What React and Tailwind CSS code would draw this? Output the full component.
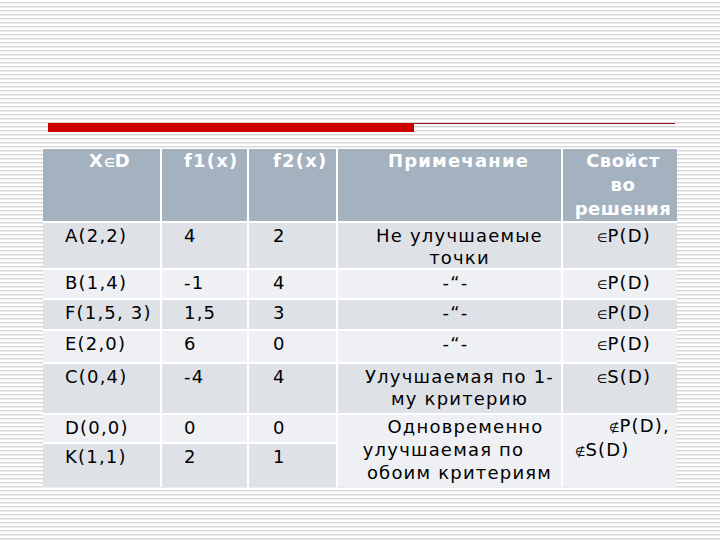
import React from "react";

// цвета ячеек таблицы
const DARK = "bg-[#dee2e7]";
const LIGHT = "bg-[#eef0f3]";

function Elem({ not = false }) {
  return <span className="text-[12px] tracking-normal">{not ? "∉" : "∈"}</span>;
}

const rows = [
  { x: "A(2,2)", f1: "4", f2: "2", note: ["Не улучшаемые", "точки"], set: "P(D)", shade: DARK },
  { x: "B(1,4)", f1: "-1", f2: "4", note: ["-“-"], set: "P(D)", shade: LIGHT, pad: "pl-[12px]" },
  { x: "F(1,5, 3)", f1: "1,5", f2: "3", note: ["-“-"], set: "P(D)", shade: DARK, pad: "pl-[12px]" },
  { x: "E(2,0)", f1: "6", f2: "0", note: ["-“-"], set: "P(D)", shade: LIGHT, pad: "pl-[12px]" },
  { x: "C(0,4)", f1: "-4", f2: "4", note: ["Улучшаемая по 1-", "му критерию"], set: "S(D)", shade: DARK },
];

export default function App() {
  return (
    <div className="w-[720px] h-[540px] overflow-hidden bg-[repeating-linear-gradient(180deg,#ffffff_0px,#ffffff_2px,#d8d8d8_2px,#d8d8d8_3px,#ededed_3px,#ededed_4px)] font-['DejaVu_Sans',sans-serif] text-black">
      {/* красная полоса заголовка */}
      <div className="flex pt-[123px] pl-[48px] pr-[45px]">
        <div className="w-[366px] h-[9px] bg-[#cc0000]" />
        <div className="flex-1 h-[1px] bg-[#8e1c1c]" />
      </div>

      {/* таблица */}
      <div className="ml-[43px] mt-[17px] w-[634px] grid grid-cols-[117px_85px_87px_223px_114px] grid-rows-[72px_45px_28px_29px_31px_49px_27px_43px] gap-[2px] bg-white text-[18px] leading-[22px] tracking-[1.2px]">
        {/* шапка */}
        <div className="bg-[#a4b1bf] text-white font-bold leading-[24px] pl-[46px]">
          X<Elem />D
        </div>
        <div className="bg-[#a4b1bf] text-white font-bold leading-[24px] pl-[22px]">f1(x)</div>
        <div className="bg-[#a4b1bf] text-white font-bold leading-[24px] pl-[24px]">f2(x)</div>
        <div className="bg-[#a4b1bf] text-white font-bold leading-[24px] text-center pl-[18px]">Примечание</div>
        <div className="bg-[#a4b1bf] text-white font-bold leading-[24px] text-center pl-[6px] tracking-[0.5px]">
          Свойст
          <br />
          во
          <br />
          решения
        </div>

        {rows.map((r) => (
          <React.Fragment key={r.x}>
            <div className={`${r.shade} pl-[22px] pt-[2px]`}>{r.x}</div>
            <div className={`${r.shade} pl-[22px] pt-[2px]`}>{r.f1}</div>
            <div className={`${r.shade} pl-[24px] pt-[2px]`}>{r.f2}</div>
            <div className={`${r.shade} text-center pt-[2px] ${r.pad || "pl-[20px]"}`}>
              {r.note.map((line) => (
                <div key={line}>{line}</div>
              ))}
            </div>
            <div className={`${r.shade} text-center pl-[8px] pt-[2px]`}>
              <Elem />
              {r.set}
            </div>
          </React.Fragment>
        ))}

        {/* строки D и K с объединёнными ячейками */}
        <div className={`${LIGHT} pl-[22px] pt-[2px]`}>D(0,0)</div>
        <div className={`${LIGHT} pl-[22px] pt-[2px]`}>0</div>
        <div className={`${LIGHT} pl-[24px] pt-[2px]`}>0</div>
        <div className={`${LIGHT} row-span-2 text-center pl-[20px] pt-0 leading-[23px]`}>
          <div className="pl-[12px]">Одновременно</div>
          <div className="pr-[32px]">улучшаемая по</div>
          <div>обоим критериям</div>
        </div>
        <div className={`${LIGHT} row-span-2 pt-0`}>
          <div className="pl-[46px]">
            <Elem not />
            P(D),
          </div>
          <div className="pl-[12px]">
            <Elem not />
            S(D)
          </div>
        </div>
        <div className={`${DARK} pl-[22px] pt-[2px]`}>K(1,1)</div>
        <div className={`${DARK} pl-[22px] pt-[2px]`}>2</div>
        <div className={`${DARK} pl-[24px] pt-[2px]`}>1</div>
      </div>
    </div>
  );
}
